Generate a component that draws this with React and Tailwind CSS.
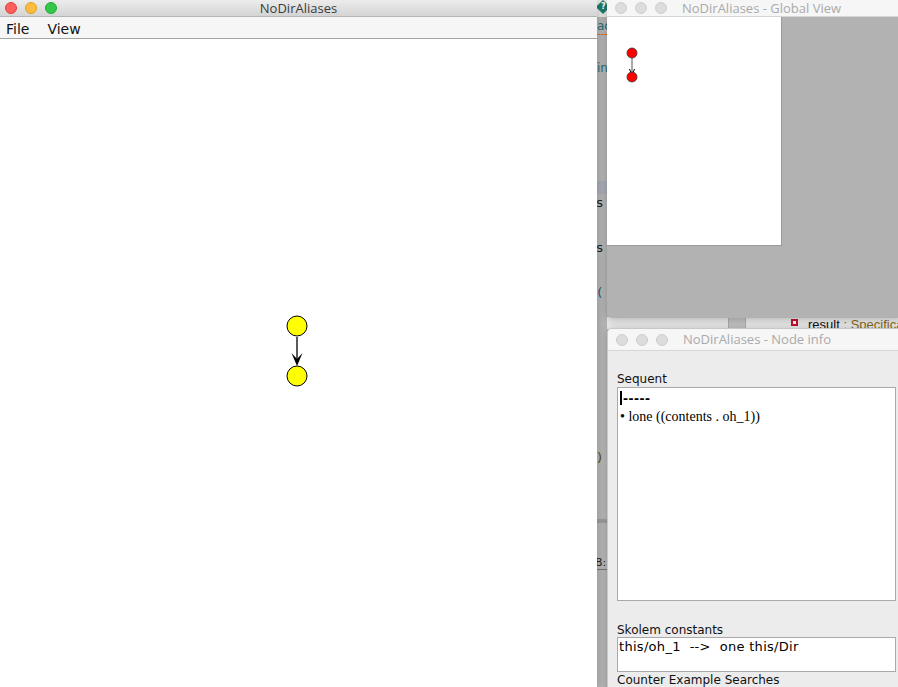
import React from "react";

const sys = { fontFamily: '"DejaVu Sans", "Open Sans", sans-serif' };
const title = { fontFamily: '"Open Sans", "DejaVu Sans", sans-serif' };

function Lights({ active }) {
  if (active) {
    return (
      <div className="flex items-center gap-[8px]">
        <span className="block w-[12px] h-[12px] rounded-full bg-[#fc605c] border border-[#e0443e]" />
        <span className="block w-[12px] h-[12px] rounded-full bg-[#fdbc40] border border-[#dea123]" />
        <span className="block w-[12px] h-[12px] rounded-full bg-[#34c84a] border border-[#27aa35]" />
      </div>
    );
  }
  return (
    <div className="flex items-center gap-[8px]">
      <span className="block w-[12px] h-[12px] rounded-full bg-[#dcdcdc] border border-[#cfcfcf]" />
      <span className="block w-[12px] h-[12px] rounded-full bg-[#dcdcdc] border border-[#cfcfcf]" />
      <span className="block w-[12px] h-[12px] rounded-full bg-[#dcdcdc] border border-[#cfcfcf]" />
    </div>
  );
}

export default function App() {
  return (
    <div className="relative w-[898px] h-[687px] overflow-hidden bg-[#b4b4b4]">
      {/* Eclipse window behind */}
      <div className="absolute left-[597px] top-0 w-[301px] h-[687px] bg-[#b5b5b5]">
        <div className="absolute left-0 top-0 w-[10px] h-[17px] bg-[#e8e8e8]" />
        <div className="absolute left-[1px] top-[2px] w-[10px] h-[10px] rotate-45 bg-[#1f7a6a] flex items-center justify-center">
          <span className="-rotate-45 text-white text-[8px] leading-none font-bold" style={sys}>?</span>
        </div>
        <div className="absolute left-[0px] top-[20px] text-[12px] leading-none text-[#1f6e7a] whitespace-nowrap" style={sys}>ac</div>
        <div className="absolute left-[0px] top-[34px] w-[10px] border-b border-dashed border-[#e07020]" />
        <div className="absolute left-[0px] top-[62px] text-[12px] leading-none text-[#1f6e7a] whitespace-nowrap" style={sys}>in</div>
        <div className="absolute left-0 top-[181px] w-[10px] h-[13px] bg-[#a9adb6]" />
        <div className="absolute left-[-6px] top-[196px] text-[13px] leading-none text-[#222] whitespace-nowrap" style={sys}>rs</div>
        <div className="absolute left-[-6px] top-[241px] text-[13px] leading-none text-[#222] whitespace-nowrap" style={sys}>rs</div>
        <div className="absolute left-[-8px] top-[286px] text-[13px] leading-none text-[#1f5e7a] whitespace-nowrap" style={sys}>n(</div>
        <div className="absolute left-[-5px] top-[451px] text-[13px] leading-none text-[#5a4a10] whitespace-nowrap" style={sys}>))</div>
        <div className="absolute left-0 top-[519px] w-[10px] h-[4px] bg-[#9c9c9c]" />
        <div className="absolute left-[-2px] top-[557px] text-[11px] leading-none text-[#222] whitespace-nowrap" style={sys}>B::</div>
        <div className="absolute left-0 top-[569px] w-[10px] border-b border-[#777]" />
        {/* strip under the global view */}
        <div className="absolute left-[10px] top-[317px] w-[291px] h-[12px] bg-[#ededed] flex overflow-hidden">
          <div className="w-[121px] shrink-0" />
          <div className="w-[18px] shrink-0 h-full bg-[#c6c6c6] border-l border-r border-[#b0b0b0]" />
          <div className="flex items-start pt-[1px] pl-[46px] gap-[11px] shrink-0">
            <span className="block mt-[2px] w-[5px] h-[5px] bg-[#fff] border border-[#c8102e] ring-1 ring-[#c8102e]" />
            <span className="text-[13px] leading-[13px] text-[#111] whitespace-nowrap" style={{ fontFamily: '"Liberation Sans", sans-serif' }}>
              result <span className="text-[#8b6b1a]">: Specifica</span>
            </span>
          </div>
        </div>
      </div>

      {/* Main window */}
      <div className="absolute left-0 top-0 w-[597px] h-[687px] flex flex-col bg-white shadow-[2px_0_6px_rgba(0,0,0,0.15)]">
        <div className="relative h-[17px] flex items-center px-[5px] bg-gradient-to-b from-[#ececec] to-[#d4d4d4] border-b border-[#b4b4b4]">
          <Lights active />
          <div className="absolute inset-0 flex items-center justify-center text-[13px] leading-none text-[#3b3b3b]" style={title}>
            NoDirAliases
          </div>
        </div>
        <div className="h-[22px] flex items-center gap-[18px] px-[6px] pt-[3px] bg-[#f6f6f6] border-b border-[#a3a3a3] text-[14px] text-[#111]" style={sys}>
          <span>File</span>
          <span>View</span>
        </div>
        <div className="relative flex-1 bg-white">
          <svg className="absolute left-0 top-0" width="597" height="647">
            <line x1="297" y1="298" x2="297" y2="325" stroke="#000" strokeWidth="1.3" />
            <path d="M291.5 314 L297 327 L302.5 314 L297 320 Z" fill="#000" />
            <circle cx="297" cy="287" r="10" fill="#ffff00" stroke="#000" strokeWidth="1" />
            <circle cx="297" cy="337" r="10" fill="#ffff00" stroke="#000" strokeWidth="1" />
          </svg>
        </div>
      </div>

      {/* Global View window */}
      <div className="absolute left-[607px] top-0 w-[295px] h-[318px] flex flex-col rounded-bl-[5px] overflow-hidden bg-[#b2b2b2] shadow-[0_2px_8px_rgba(0,0,0,0.25)]">
        <div className="relative h-[17px] flex items-center px-[8px] bg-[#f6f6f6] border-b border-[#d6d6d6]">
          <Lights />
          <span className="ml-[15px] text-[13px] leading-none text-[#aaaaaa] whitespace-nowrap" style={title}>NoDirAliases - Global View</span>
        </div>
        <div className="flex-1 flex items-start">
          <div className="relative w-[175px] h-[229px] bg-white border-r border-b border-[#9a9a9a]">
            <svg className="absolute left-0 top-0" width="175" height="229">
              <line x1="25" y1="41" x2="25" y2="56" stroke="#555" strokeWidth="1" />
              <path d="M22.5 52 L25 58 L27.5 52" fill="none" stroke="#000" strokeWidth="1" />
              <circle cx="25" cy="36" r="5" fill="#ff0000" stroke="#333" strokeWidth="0.8" />
              <circle cx="25" cy="60" r="5" fill="#ff0000" stroke="#333" strokeWidth="0.8" />
            </svg>
          </div>
        </div>
      </div>

      {/* Node info window */}
      <div className="absolute left-[607px] top-[328px] w-[300px] h-[370px] flex flex-col rounded-t-[5px] overflow-hidden bg-[#ececec] border-l border-t border-[#c8c8c8] shadow-[0_0_8px_rgba(0,0,0,0.2)]">
        <div className="h-[22px] flex items-center px-[8px] bg-[#f6f6f6] border-b border-[#d6d6d6]">
          <Lights />
          <span className="ml-[15px] text-[13px] leading-none text-[#aaaaaa] whitespace-nowrap" style={title}>NoDirAliases - Node info</span>
        </div>
        <div className="flex flex-col pl-[9px] pt-[21px]" style={sys}>
          <div className="h-[15px] text-[12px] leading-[15px] text-[#111]">Sequent</div>
          <div className="w-[279px] h-[214px] bg-white border border-[#a9a9a9] px-[2px] pt-[1px]">
            <div className="flex items-center h-[17px]">
              <span className="block w-[2px] h-[14px] bg-black mr-[1px]" />
              <span className="text-[15px] font-bold leading-none text-black tracking-[0.5px]" style={{ fontFamily: '"Liberation Sans", sans-serif' }}>-----</span>
            </div>
            <div className="text-[14px] leading-[18px] text-black pt-[2px] whitespace-nowrap" style={{ fontFamily: '"Liberation Serif", serif' }}>
              • lone ((contents . oh_1))
            </div>
          </div>
          <div className="h-[22px]" />
          <div className="h-[14px] text-[12px] leading-[14px] text-[#111]">Skolem constants</div>
          <div className="w-[279px] h-[35px] bg-white border border-[#a9a9a9] px-[1px]">
            <div className="text-[13px] leading-[18px] text-black whitespace-pre tracking-[0.3px]">this/oh_1  --&gt;  one this/Dir</div>
          </div>
          <div className="text-[12px] leading-[15px] text-[#111] pt-[1px] whitespace-nowrap">Counter Example Searches</div>
        </div>
      </div>
    </div>
  );
}
